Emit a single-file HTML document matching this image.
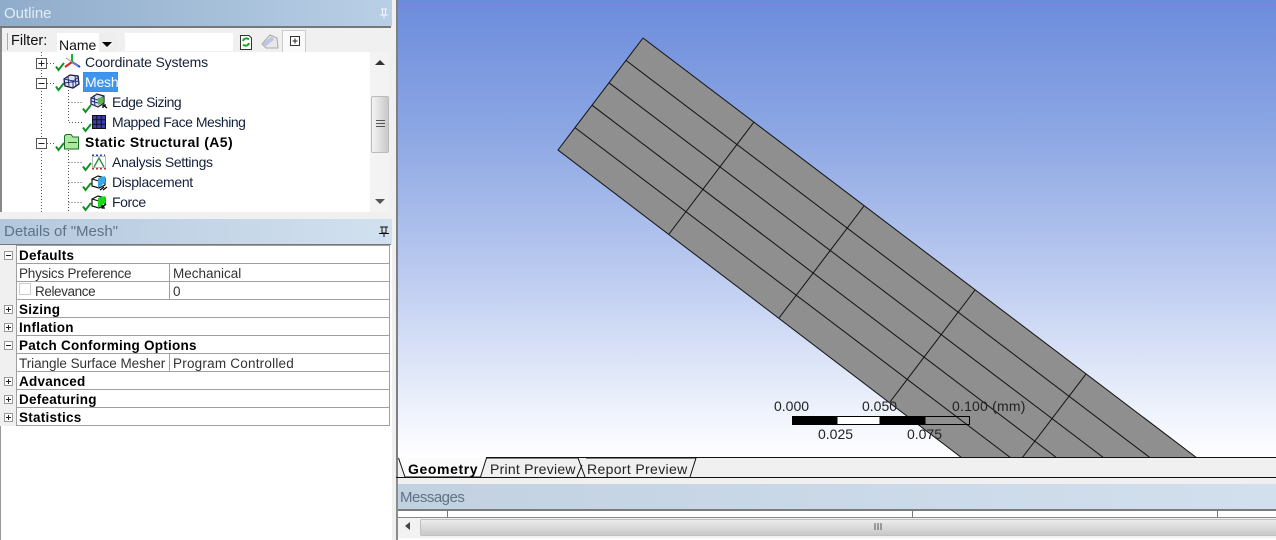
<!DOCTYPE html>
<html>
<head>
<meta charset="utf-8">
<style>
html,body{margin:0;padding:0;background:#f0f0f0}
#p{position:relative;width:1276px;height:540px;overflow:hidden;background:#f0f0f0;font-family:"Liberation Sans",sans-serif;font-size:14px;color:#111}
#p div{position:absolute;box-sizing:border-box}
.t{white-space:nowrap;line-height:18px;height:18px}
.b{font-weight:bold;color:#000}
.tr{color:#14213a}
.row{left:17px;width:373px;height:18px;border-bottom:1px solid #a0a0a0;border-right:1px solid #a0a0a0}
.row .t{top:1px}
.row .t.b{font-size:13.5px;letter-spacing:.25px}
.l{font-size:13.5px;color:#333}
svg{position:absolute;left:0;top:0}
</style>
</head>
<body>
<div id="p">
<!-- left pane headers -->
<div style="left:0;top:0;width:392px;height:26px;background:linear-gradient(90deg,#8facca,#b9cfe6)"></div>
<div class="t" style="left:4px;top:5px;color:#e4edf6;font-size:15px">Outline</div>
<div style="left:0;top:26px;width:391px;height:2px;background:#777"></div>
<div style="left:0;top:28px;width:2px;height:184px;background:#888"></div>
<div style="left:2px;top:28px;width:387px;height:24px;background:#f0f0f0"></div>
<div style="left:2px;top:52px;width:368px;height:160px;background:#fff"></div>
<div style="left:370px;top:52px;width:19px;height:160px;background:#f3f3f3"></div>
<div style="left:371px;top:96px;width:18px;height:57px;background:linear-gradient(90deg,#f4f4f4,#c9c9c9);border:1px solid #bbb;border-radius:2px"></div>
<div style="left:0;top:212px;width:392px;height:7px;background:#f0f0f0"></div>
<div style="left:57px;top:33px;width:60px;height:19px;background:#fff"></div>
<div style="left:99px;top:33px;width:18px;height:19px;background:#eee"></div>
<div style="left:125px;top:33px;width:108px;height:18px;background:#fff"></div>
<div style="left:282px;top:30px;width:24px;height:22px;background:#fafafa;border:1px solid #ccc;border-bottom:0"></div>
<div class="t" style="left:11px;top:32px;font-size:14.5px">Filter:</div>
<div class="t" style="left:59px;top:36px">Name</div>
<div style="left:0;top:219px;width:392px;height:25px;background:linear-gradient(90deg,#b4c8dd,#d2e1f0)"></div>
<div class="t" style="left:4px;top:223px;color:#5e7287;font-size:15px">Details of "Mesh"</div>
<div style="left:0;top:244px;width:391px;height:1px;background:#777"></div>
<div style="left:0;top:245px;width:392px;height:295px;background:#fff"></div>
<div style="left:0;top:245px;width:1px;height:295px;background:#999"></div>
<div style="left:0;top:245px;width:17px;height:181px;background:#f0f0f0"></div>
<!-- tree text -->
<div class="t tr" style="left:85px;top:53px;letter-spacing:-.17px">Coordinate Systems</div>
<div style="left:83px;top:72px;width:35px;height:20px;background:#3d95ee;border:1px dotted #c8641e"></div>
<div class="t" style="left:85px;top:73px;color:#fff;letter-spacing:-.2px">Mesh</div>
<div class="t tr" style="left:112px;top:93px;letter-spacing:-.5px">Edge Sizing</div>
<div class="t tr" style="left:112px;top:113px;letter-spacing:-.47px">Mapped Face Meshing</div>
<div class="t b" style="left:85px;top:133px;letter-spacing:.4px">Static Structural (A5)</div>
<div class="t tr" style="left:112px;top:153px;letter-spacing:-.35px">Analysis Settings</div>
<div class="t tr" style="left:112px;top:173px;letter-spacing:-.33px">Displacement</div>
<div class="t tr" style="left:112px;top:193px;letter-spacing:-.4px">Force</div>
<!-- details table -->
<div style="left:17px;top:245px;width:373px;height:1px;background:#a0a0a0"></div>
<div class="row" style="top:246px"><div class="t b" style="left:2px">Defaults</div></div>
<div class="row" style="top:264px"><div class="t l" style="left:2px;letter-spacing:-.22px">Physics Preference</div><div class="t l" style="left:156px">Mechanical</div><div style="left:152px;top:0;width:1px;height:17px;background:#a0a0a0"></div></div>
<div class="row" style="top:282px"><div style="left:2px;top:1px;width:12px;height:12px;border:1px solid #ccc"></div><div class="t l" style="left:18px;letter-spacing:-.4px">Relevance</div><div class="t l" style="left:156px">0</div><div style="left:152px;top:0;width:1px;height:17px;background:#a0a0a0"></div></div>
<div class="row" style="top:300px"><div class="t b" style="left:2px">Sizing</div></div>
<div class="row" style="top:318px"><div class="t b" style="left:2px">Inflation</div></div>
<div class="row" style="top:336px"><div class="t b" style="left:2px">Patch Conforming Options</div></div>
<div class="row" style="top:354px"><div class="t l" style="left:2px;letter-spacing:-.05px">Triangle Surface Mesher</div><div class="t l" style="left:156px;letter-spacing:.22px">Program Controlled</div><div style="left:152px;top:0;width:1px;height:17px;background:#a0a0a0"></div></div>
<div class="row" style="top:372px"><div class="t b" style="left:2px">Advanced</div></div>
<div class="row" style="top:390px"><div class="t b" style="left:2px">Defeaturing</div></div>
<div class="row" style="top:408px"><div class="t b" style="left:2px">Statistics</div></div>
<div style="left:16px;top:245px;width:1px;height:181px;background:#a0a0a0"></div>

<!-- viewport -->
<div style="left:392px;top:0;width:4px;height:540px;background:#f0f0f0"></div>
<div style="left:396px;top:0;width:2px;height:480px;background:#7f7f7f"></div>
<div style="left:398px;top:0;width:878px;height:458px;background:linear-gradient(180deg,#6c8cdc 0%,#8ea8e4 30%,#bccbf0 60%,#e6ecfa 85%,#fff 100%)"></div>
<div style="left:398px;top:1px;width:878px;height:1px;background:#8c8c8c"></div>
<div style="left:396px;top:477px;width:880px;height:1px;background:#111"></div>
<div style="left:396px;top:478px;width:880px;height:6px;background:#f0f0f0"></div>
<div style="left:396px;top:484px;width:880px;height:25px;background:linear-gradient(90deg,#c2d1e0,#d2e0ee)"></div>
<div class="t" style="left:400px;top:489px;color:#5e7287;font-size:15px;letter-spacing:-.5px">Messages</div>
<div style="left:396px;top:509px;width:880px;height:2px;background:#7c7c7c"></div>
<div style="left:396px;top:511px;width:880px;height:6px;background:#fff"></div>
<div style="left:447px;top:511px;width:1px;height:6px;background:#777"></div>
<div style="left:912px;top:511px;width:1px;height:6px;background:#777"></div>
<div style="left:1217px;top:511px;width:1px;height:6px;background:#777"></div>
<div style="left:396px;top:517px;width:880px;height:1px;background:#888"></div>
<div style="left:396px;top:518px;width:880px;height:20px;background:#f2f2f2"></div>
<div style="left:420px;top:519px;width:856px;height:17px;background:linear-gradient(180deg,#ececec,#c8c8c8);border:1px solid #c0c0c0;border-right:0;border-radius:2px 0 0 2px"></div>
<div style="left:396px;top:538px;width:880px;height:2px;background:#fff"></div>
<div style="left:396px;top:478px;width:2px;height:62px;background:#8c8c8c"></div>

<svg width="1276" height="540" viewBox="0 0 1276 540">
<defs>
<g id="chk"><path d="M0 3.500 L2.500 7 L8 0" fill="none" stroke="#12912a" stroke-width="2"/></g>
<g id="plus"><rect x="0.500" y="0.500" width="10" height="10" fill="#fff" stroke="#555"/><path d="M2.500 5.500H8.500M5.500 2.500V8.500" stroke="#222"/></g>
<g id="minus"><rect x="0.500" y="0.500" width="10" height="10" fill="#fff" stroke="#555"/><path d="M2.500 5.500H8.500" stroke="#222"/></g>
<g id="dplus"><rect x="0.500" y="0.500" width="8" height="8" fill="#fff" stroke="#999"/><path d="M2 4.500H7M4.500 2V7" stroke="#222"/></g>
<g id="dminus"><rect x="0.500" y="0.500" width="8" height="8" fill="#fff" stroke="#999"/><path d="M2 4.500H7" stroke="#222"/></g>
<g id="cube"><path d="M1 4 L7 1 L14 3 L14 10 L8 13 L1 11Z" fill="#fff" stroke="#111" stroke-width="1.2"/><path d="M1 4L8 6L14 3M8 6V13" fill="none" stroke="#111" stroke-width="1.1"/></g>
</defs>
<!-- model -->
<polygon points="643,38 558,150 962,458 1197,458" fill="#8f8f8f"/>
<g stroke="#111" stroke-width="1" fill="none">
<path d="M643 38 L558 150 L962 458"/>
<path d="M643 38 L1197 458"/>
<path d="M626 60.400 L1150.500 458M609 82.800 L1104 458M592 105.200 L1057 458M575 127.600 L1011 458"/>
<path d="M754 122 L669 234M864 206 L779 318M975 290 L890 402M1086 374 L1022 458"/>
</g>
<!-- tabs -->
<path d="M399 458 L405 477H481 L487 458Z" fill="#fbfbfb"/>
<path d="M487 458H578L585 477H577L584 461L586 458H696L690 477H585Z" fill="#f0f0f0"/>
<path d="M696 458H1276V477H690Z" fill="#f0f0f0"/>
<path d="M398.500 458 L405 477H480.500 L486.500 458H578 L585 477M577 477 L582 465M586 458H696 L690 477" fill="none" stroke="#111"/>
<path d="M486 457.500H1276" stroke="#111"/>
<!-- scale bar -->
<rect x="792" y="416" width="45" height="9" fill="#000"/>
<rect x="837" y="416.500" width="43" height="8" fill="#fff" stroke="#000"/>
<rect x="880" y="416" width="45" height="9" fill="#000"/>
<rect x="925" y="416.500" width="44.500" height="8" fill="none" stroke="#000"/>
<!-- tree lines -->
<g stroke="#555" stroke-dasharray="1 2" fill="none">
<path d="M41.500 52V212M47 63.500H56M47 83.500H56M47 143.500H56"/>
<path d="M68.500 90V122.500H82M68.500 102.500H82"/>
<path d="M68.500 150V212M68.500 162.500H82M68.500 182.500H82M68.500 202.500H82"/>
</g>
<use href="#plus" x="36" y="58"/><use href="#minus" x="36" y="78"/><use href="#minus" x="36" y="138"/>
<use href="#chk" x="56" y="63"/><use href="#chk" x="56" y="83"/><use href="#chk" x="56" y="143"/>
<use href="#chk" x="83" y="105"/><use href="#chk" x="83" y="124"/><use href="#chk" x="83" y="163"/><use href="#chk" x="83" y="183"/><use href="#chk" x="83" y="203"/>
<!-- coord icon -->
<path d="M72 62V54" stroke="#19b32c" stroke-width="2"/><path d="M72 62L65 67" stroke="#d22" stroke-width="2"/><path d="M72 62L80 67" stroke="#2246c8" stroke-width="2"/><path d="M66 58L78 66" stroke="#999"/>
<!-- mesh icon -->
<path d="M64 79L70 75L78 76L79 84L73 88L65 86Z" fill="#dfe3f2" stroke="#1a1a3a" stroke-width="1.300"/>
<path d="M64 79L73 81L79 77M73 81V88M68 76L69 87M75 75L76 86M64 83L79 81" stroke="#22307e" fill="none"/>
<!-- edge sizing -->
<path d="M91 98L97 94L104 96L104 103L98 107L91 104Z" fill="#dfe3f2" stroke="#1a1a3a" stroke-width="1.200"/>
<path d="M91 98L98 100L104 96M94 95L95 106M91 101L98 103" stroke="#22307e" fill="none"/>
<path d="M98 98L103 97L103 103L98 105Z" fill="#58b648"/>
<path d="M103 105L107 108M103 105V108M103 105H106" stroke="#000" stroke-width="1.300" fill="none"/>
<!-- mapped -->
<rect x="92.500" y="115.500" width="13" height="13" fill="#3b3fae" stroke="#111"/><path d="M96.800 115V129M101.200 115V129M92 119.800H106M92 124.200H106" stroke="#111"/>
<!-- static folder -->
<path d="M64.500 149V136L66 134.500H71L73 137H78.500V149Z" fill="#aee89e" stroke="#1c6b2a"/><path d="M68 142.500H77" stroke="#1c6b2a"/>
<!-- analysis -->
<path d="M92 155.500H105" stroke="#2a3fc8" stroke-dasharray="2 2" stroke-width="2"/><path d="M92 168.500H106" stroke="#c03030" stroke-dasharray="2 2" stroke-width="2"/><path d="M94 167L99 158L104 167" fill="none" stroke="#258a3a" stroke-width="1.300"/><rect x="92.500" y="156.500" width="13" height="11" fill="none" stroke="#bbb"/>
<!-- displacement -->
<use href="#cube" x="91" y="175"/><path d="M98 178L105 176V183L98 188Z" fill="#38a8e8"/><path d="M100 190L104 187M103 190L107 187" stroke="#000" stroke-width="1.200"/>
<!-- force -->
<use href="#cube" x="91" y="195"/><path d="M98 198L105 196V203L98 208Z" fill="#18d818"/><path d="M106 204L102 208M102 205V208H105" stroke="#000" stroke-width="1.200" fill="none"/>
<!-- toolbar icons -->
<path d="M240.500 35.500H249L251.500 38V49.500H240.500Z" fill="#fff" stroke="#333"/><path d="M243 41a3.500 3.500 0 0 1 6-1.500M249 43a3.500 3.500 0 0 1-6 1.500" stroke="#1fa02c" stroke-width="2" fill="none"/>
<path d="M262 44L270 35L277 38L278 48H266Z" fill="#e8e8e8" stroke="#aaa"/><path d="M264 45L273 38" stroke="#bcc6e4" stroke-width="4"/>
<rect x="290.500" y="36.500" width="9" height="9" fill="#fff" stroke="#333"/><path d="M292.500 41H297.500M295 38.500V43.500" stroke="#222"/>
<path d="M102 42H112L107 47Z" fill="#000"/>
<path d="M7.500 33V50" stroke="#aaa"/>
<!-- pins -->
<path d="M381 9H387M382.500 9V15H385.500V9M380 15H388M384 15V19" stroke="#f3f6fa" fill="none"/>
<path d="M380 227H388M382 227V233H386V227M379 233.500H389M384 233V237" stroke="#111" fill="none"/>
<!-- scroll arrows -->
<path d="M375 65L380 60L385 65Z" fill="#333"/><path d="M375 199L385 199L380 204Z" fill="#555"/>
<path d="M376 120.500H385M376 123.500H385M376 126.500H385" stroke="#555"/>
<path d="M405 526L410 522V530Z" fill="#444"/>
<path d="M875 523V530M878 523V530M881 523V530" stroke="#555"/>
<!-- expanders details -->
<use href="#dminus" x="4" y="251"/>
<use href="#dplus" x="4" y="305"/>
<use href="#dplus" x="4" y="323"/>
<use href="#dminus" x="4" y="341"/>
<use href="#dplus" x="4" y="377"/>
<use href="#dplus" x="4" y="395"/>
<use href="#dplus" x="4" y="413"/>
</svg>

<div class="t" style="left:774px;top:397px;color:#222">0.000</div>
<div class="t" style="left:862px;top:397px;color:#222">0.050</div>
<div class="t" style="left:952px;top:397px;color:#222;letter-spacing:.2px">0.100 (mm)</div>
<div class="t" style="left:818px;top:425px;color:#222">0.025</div>
<div class="t" style="left:907px;top:425px;color:#222">0.075</div>
<div class="t b" style="left:408px;top:460px;letter-spacing:.6px">Geometry</div>
<div class="t" style="left:490px;top:460px;color:#222;letter-spacing:.25px">Print Preview</div>
<div class="t" style="left:587px;top:460px;color:#222;letter-spacing:.35px">Report Preview</div>
</div>
</body>
</html>
